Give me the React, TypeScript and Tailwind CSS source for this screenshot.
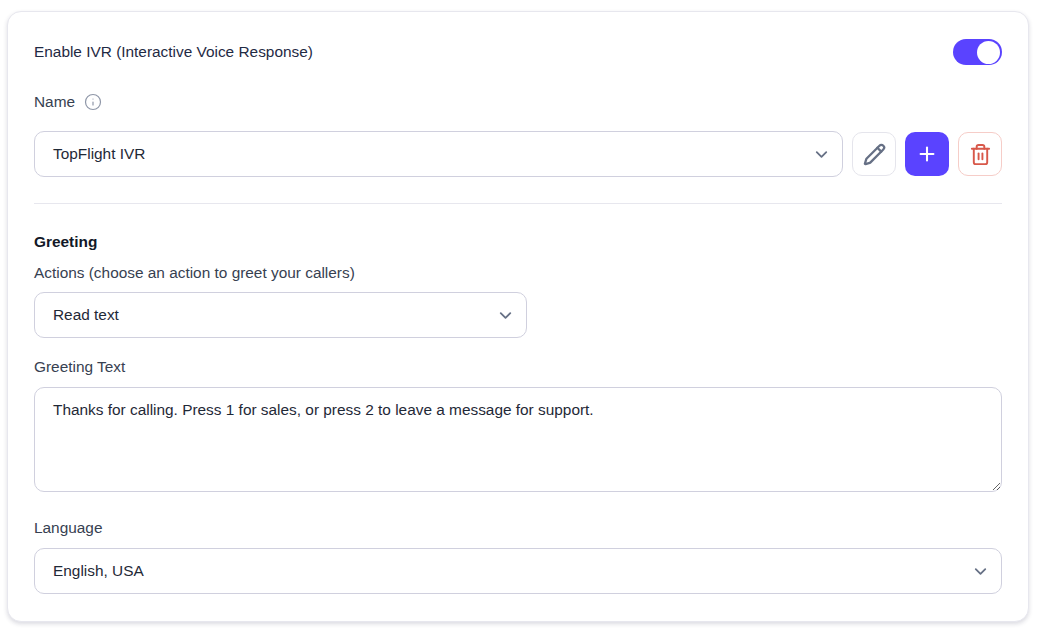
import { ChevronDown, Info, Plus, Trash2 } from "lucide-react";

const Dropdown = ({ value, className }: { value: string; className: string }) => (
  <button
    type="button"
    className={`flex h-[46px] items-center justify-between rounded-[10px] border border-[#d0d0de] bg-white pl-[18px] pr-[11px] text-[15.4px] text-[#1f2937] ${className}`}
  >
    <span>{value}</span>
    <ChevronDown className="h-[19px] w-[19px] text-[#667085]" strokeWidth={2.25} />
  </button>
);

const App = () => {
  return (
    <div className="h-[634px] bg-white pl-[7px] pt-[11px] font-['Liberation_Sans',Arial,sans-serif]">
      <div className="flex h-[611px] w-[1022px] flex-col rounded-[14px] border border-[#e7e7ee] bg-white pl-[26px] pr-[26px] pt-[27px] shadow-[0_2px_4px_rgba(30,30,70,0.16)]">
        <div className="flex h-[26px] items-center justify-between">
          <span className="text-[15.4px] text-[#1f2a44]">Enable IVR (Interactive Voice Response)</span>
          <div className="flex h-[26px] w-[49px] items-center justify-end rounded-full bg-[#5a43ff] pr-[2px]">
            <div className="h-[23px] w-[23px] rounded-full bg-white" />
          </div>
        </div>

        <div className="mt-[27px] flex h-[20px] items-center gap-[9px]">
          <span className="text-[15.4px] text-[#374151]">Name</span>
          <Info className="h-[18px] w-[18px] text-[#8f97a8]" strokeWidth={1.6} />
        </div>

        <div className="mt-[19px] flex items-center gap-[9px]">
          <Dropdown value="TopFlight IVR" className="w-[809px]" />
          <button type="button" className="flex h-11 w-11 items-center justify-center rounded-[10px] border border-[#e5e5ec] bg-white">
            {/* pencil, a bit heavier than the lucide one */}
            <svg viewBox="0 0 24 24" className="ml-[1px] h-[23px] w-[23px] text-[#667085]" fill="none" stroke="currentColor" strokeWidth={2.4} strokeLinecap="round" strokeLinejoin="round">
              <path d="M21.174 6.812a1 1 0 0 0-3.986-3.987L3.842 16.174a2 2 0 0 0-.5.83l-1.321 4.352a.5.5 0 0 0 .623.622l4.353-1.32a2 2 0 0 0 .83-.497z" />
              <path d="m15 5 4 4" />
            </svg>
          </button>
          <button type="button" className="flex h-11 w-11 items-center justify-center rounded-[10px] bg-[#5a43ff]">
            <Plus className="h-[22px] w-[22px] text-white" strokeWidth={2.25} />
          </button>
          <button type="button" className="flex h-11 w-11 items-center justify-center rounded-[10px] border border-[#f6cdc8] bg-white">
            <Trash2 className="h-[23px] w-[23px] text-[#d8584a]" strokeWidth={2} />
          </button>
        </div>

        <div className="mt-[26px] h-px bg-[#e7e7ee]" />

        <h2 className="mt-[28px] h-[20px] text-[15.4px] leading-5 font-bold text-[#111827]">Greeting</h2>
        <label className="mt-[11px] h-[20px] text-[15.4px] leading-5 text-[#374151]">Actions (choose an action to greet your callers)</label>
        <Dropdown value="Read text" className="mt-[9px] w-[493px]" />

        <label className="mt-[19px] h-[20px] text-[15.4px] leading-5 text-[#374151]">Greeting Text</label>
        <textarea
          defaultValue="Thanks for calling. Press 1 for sales, or press 2 to leave a message for support."
          className="mt-[10px] h-[105px] w-full resize-y rounded-[10px] border border-[#d0d0de] bg-white px-[18px] py-[12px] text-[15.4px] leading-5 text-[#1f2937] outline-none"
        />

        <label className="mt-[26px] h-[20px] text-[15.4px] leading-5 text-[#374151]">Language</label>
        <Dropdown value="English, USA" className="mt-[10px] w-full" />
      </div>
    </div>
  );
};

export default App;
